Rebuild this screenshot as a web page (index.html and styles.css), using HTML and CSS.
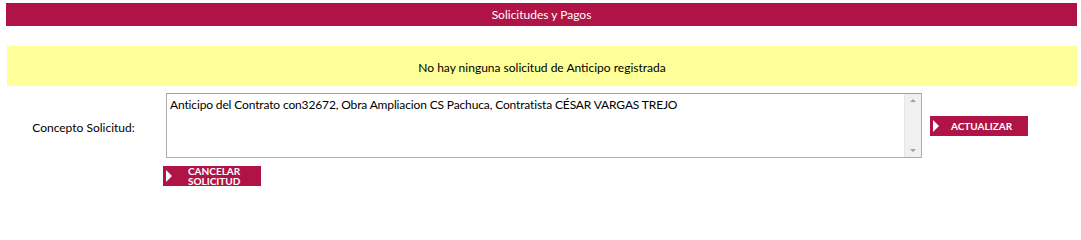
FILE: index.html
```html
<!DOCTYPE html>
<html lang="es">
<head>
<meta charset="utf-8">
<title>Solicitudes y Pagos</title>
<link rel="stylesheet" href="styles.css">
</head>
<body>
<div class="page">
  <div class="header">Solicitudes y Pagos</div>
  <div class="notice">No hay ninguna solicitud de Anticipo registrada</div>
  <div class="form-row">
    <div class="label">Concepto Solicitud:</div>
    <div class="field">
      <div class="textarea">
        <div class="ta-text">Anticipo del Contrato con32672, Obra Ampliacion CS Pachuca, Contratista CÉSAR VARGAS TREJO</div>
        <div class="scrollbar">
          <span class="arrow up"></span>
          <span class="arrow down"></span>
        </div>
      </div>
    </div>
    <button class="btn btn-update"><span class="tri"></span><span class="btn-text">ACTUALIZAR</span></button>
  </div>
  <div class="cancel-row">
    <button class="btn btn-cancel"><span class="tri"></span><span class="btn-text">CANCELAR<br>SOLICITUD</span></button>
  </div>
</div>
</body>
</html>
```
FILE: styles.css
```css
html, body {
  margin: 0;
  padding: 0;
  background: #ffffff;
}
body {
  font-family: Lato, "Open Sans", sans-serif;
  font-size: 12px;
  color: #000000;
}
.page {
  padding: 3px 4px 0 6px;
}
.header {
  height: 23px;
  background: #b01446;
  color: #ffffff;
  text-align: center;
  line-height: 23px;
  font-size: 12px;
}
.notice {
  margin: 20px 0 0 1px;
  height: 40px;
  background: #ffff99;
  text-align: center;
  line-height: 44px;
  font-size: 12px;
}
.form-row {
  display: flex;
  align-items: center;
  margin-top: 7px;
}
.label {
  width: 153px;
  margin-left: 1px;
  text-align: center;
  font-size: 12px;
  padding-top: 4px;
}
.field {
  margin-left: 6px;
}
.textarea {
  width: 754px;
  height: 63px;
  border: 1px solid #abadb3;
  border-top-color: #a0a0a0;
  display: flex;
  background: #ffffff;
}
.ta-text {
  flex: 1;
  padding: 3px 3px;
  font-size: 12px;
  line-height: 15px;
  letter-spacing: -0.14px;
}
.scrollbar {
  width: 16px;
  background: #f0f0f0;
  border-left: 1px solid #e6e6e6;
  display: flex;
  flex-direction: column;
  justify-content: space-between;
  align-items: center;
  padding: 5px 0;
}
.arrow {
  width: 0;
  height: 0;
  border-left: 3px solid transparent;
  border-right: 3px solid transparent;
}
.arrow.up {
  border-bottom: 3px solid #a0a0a0;
}
.arrow.down {
  border-top: 3px solid #a0a0a0;
}
.btn {
  display: flex;
  align-items: center;
  width: 98px;
  height: 20px;
  padding: 0;
  border: 0;
  background: #b01446;
  color: #ffffff;
  font-family: Lato, "Open Sans", sans-serif;
  font-weight: bold;
  font-size: 10px;
  line-height: 10px;
  text-align: left;
  cursor: pointer;
}
.btn-update {
  margin-left: 8px;
}
.tri {
  width: 0;
  height: 0;
  margin-left: 3px;
  border-top: 6px solid transparent;
  border-bottom: 6px solid transparent;
  border-left: 6px solid #ffffff;
}
.btn-update .btn-text {
  margin-left: 12px;
}
.btn-cancel .btn-text {
  margin-left: 16px;
}
.cancel-row {
  margin: 8px 0 0 157px;
}
```
